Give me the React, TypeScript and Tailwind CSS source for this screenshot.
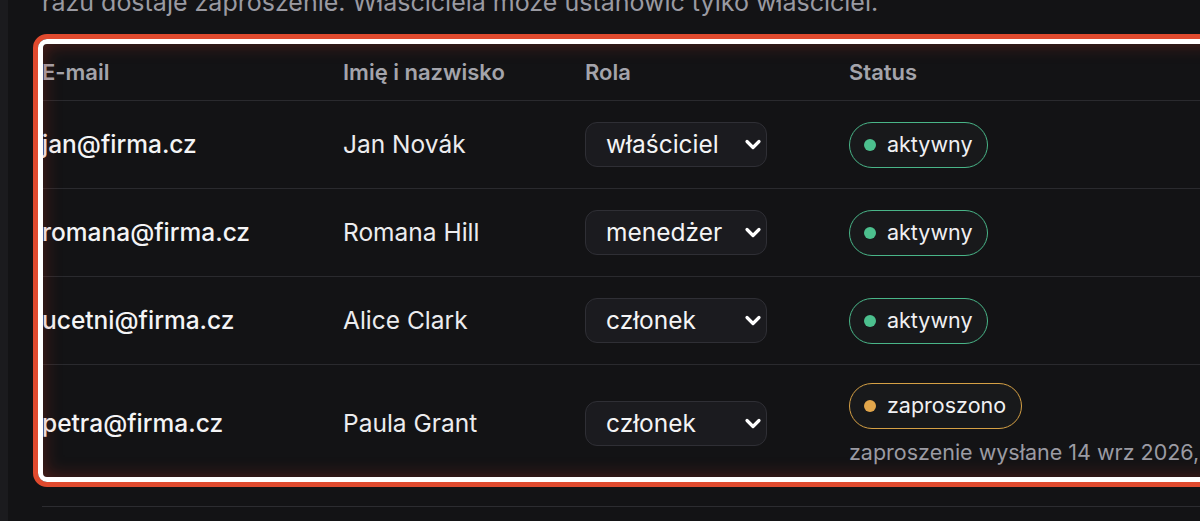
import React from "react";

interface Member {
  email: string;
  name: string;
  role: string;
  status: "active" | "invited";
  note?: string;
}

const members: Member[] = [
  { email: "jan@firma.cz", name: "Jan Novák", role: "właściciel", status: "active" },
  { email: "romana@firma.cz", name: "Romana Hill", role: "menedżer", status: "active" },
  { email: "ucetni@firma.cz", name: "Alice Clark", role: "członek", status: "active" },
  {
    email: "petra@firma.cz",
    name: "Paula Grant",
    role: "członek",
    status: "invited",
    note: "zaproszenie wysłane 14 wrz 2026, 10:42",
  },
];

const Chevron = () => (
  <svg width="18" height="11" viewBox="0 0 18 11" fill="none">
    <path d="M3 2.5 L9 8.5 L15 2.5" stroke="#ffffff" strokeWidth="3.2" strokeLinecap="round" strokeLinejoin="round" />
  </svg>
);

const RoleSelect = ({ value }: { value: string }) => (
  <div className="w-[182px] h-[45px] rounded-xl border border-[#2f2f35] bg-[#1b1b1f] flex items-center justify-between pl-[20px] pr-[4px]">
    <span className="text-[24.5px] text-[#f4f4f5]">{value}</span>
    <Chevron />
  </div>
);

const StatusBadge = ({ status }: { status: Member["status"] }) => {
  const active = status === "active";
  return (
    <div
      className={
        active
          ? "inline-flex items-center h-[46px] rounded-full border-[1.5px] border-[#49b588] bg-[#18191b] pl-[14px] pr-[15px] gap-[11px]"
          : "inline-flex items-center h-[46px] rounded-full border-[1.5px] border-[#d5a045] bg-[#18191b] pl-[14px] pr-[15px] gap-[11px]"
      }
    >
      <span className={active ? "w-[12px] h-[12px] rounded-full bg-[#4cc08e]" : "w-[12px] h-[12px] rounded-full bg-[#e2a64b]"} />
      <span className="text-[21.5px] text-[#f0f0f2]">{active ? "aktywny" : "zaproszono"}</span>
    </div>
  );
};

export default function App() {
  return (
    <div
      className="min-h-screen w-full flex overflow-hidden bg-[#131315]"
      style={{ fontFamily: "Inter, 'Noto Sans', sans-serif" }}
    >
      <div className="w-2 shrink-0 bg-[#1b1b1e]" />
      <div className="flex-1 min-w-0 pl-[34px]">
        <p className="-mt-[12px] text-[25px] leading-[28px] text-[#9a9aa2] whitespace-nowrap">
          razu dostaje zaproszenie. Właściciela może ustanowić tylko właściciel.
        </p>

        {/* Table with highlight ring */}
        <div className="relative mt-[28px] w-[1300px]">
          <div className="grid grid-cols-[301px_242px_264px_1fr] h-[57px] items-center border-b border-[#2a2a2e] text-[22px] font-semibold text-[#a4a4ab]">
            <div>E-mail</div>
            <div>Imię i nazwisko</div>
            <div>Rola</div>
            <div>Status</div>
          </div>

          {members.map((m, i) => (
            <div
              key={m.email}
              className={
                i < members.length - 1
                  ? "grid grid-cols-[301px_242px_264px_1fr] h-[88px] items-center border-b border-[#2a2a2e]"
                  : "grid grid-cols-[301px_242px_264px_1fr] h-[116px] items-center"
              }
            >
              <div className="text-[24.5px] font-medium text-[#f4f4f5]">{m.email}</div>
              <div className="text-[24.5px] text-[#ececee]">{m.name}</div>
              <div>
                <RoleSelect value={m.role} />
              </div>
              <div className="flex flex-col items-start gap-[11px]">
                <StatusBadge status={m.status} />
                {m.note && (
                  <span className="text-[21.5px] leading-[24px] text-[#9b9ba3] whitespace-nowrap">{m.note}</span>
                )}
              </div>
            </div>
          ))}

          {/* highlight overlay */}
          <div className="pointer-events-none absolute -left-[9px] -top-[10px] -bottom-[6px] right-0 rounded-[14px] border-[5px] border-[#e04a2e]">
            <div className="h-full w-full rounded-[9px] border-[5px] border-white shadow-[inset_0_0_18px_rgba(200,55,35,0.35)]" />
          </div>
        </div>

        <div className="mt-[25px] h-px w-[1300px] bg-[#2c2c30]" />
      </div>
    </div>
  );
}
